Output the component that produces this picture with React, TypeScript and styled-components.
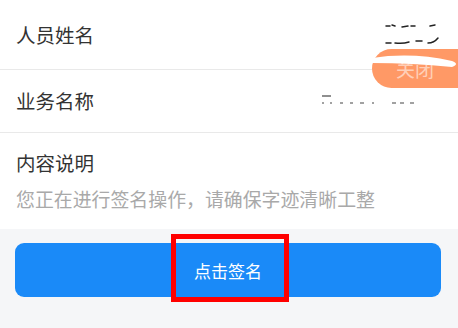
import React from "react";
import styled, { createGlobalStyle } from "styled-components";

const Global = createGlobalStyle`
  html, body { margin: 0; padding: 0; background: #f5f6f8; }
  body { font-family: "Noto Sans CJK SC", "Noto Sans", sans-serif; }
`;

const Page = styled.div`
  position: relative;
  width: 458px;
  height: 328px;
  overflow: hidden;
  background: #f5f6f8;
  display: flex;
  flex-direction: column;
`;

const Card = styled.div`
  background: #fff;
  display: flex;
  flex-direction: column;
`;

const Row = styled.div<{ $h: number }>`
  height: ${(p) => p.$h}px;
  display: flex;
  align-items: center;
  padding: 0 16px;
  border-bottom: 1px solid #e9e9e9;
  box-sizing: border-box;
`;

const Label = styled.div`
  font-size: 19.5px;
  color: #333;
  line-height: 1;
`;

const Desc = styled.div`
  display: flex;
  flex-direction: column;
  gap: 17px;
  padding: 20px 16px 18px;
  height: 96px;
  box-sizing: border-box;
`;

const Hint = styled.div`
  font-size: 18.9px;
  color: #a9a9a9;
  line-height: 1;
`;

const ButtonArea = styled.div`
  padding: 14px 17px 0 15px;
  position: relative;
`;

const SignButton = styled.button`
  width: 426px;
  height: 54px;
  border: none;
  border-radius: 9px;
  background: #1a8af8;
  color: #fff;
  font-family: "Noto Sans CJK SC", sans-serif;
  font-size: 17px;
  display: flex;
  align-items: center;
  justify-content: center;
  padding: 0;
`;

const Highlight = styled.div`
  position: absolute;
  left: 171px;
  top: 5px;
  width: 118px;
  height: 68px;
  border: 5px solid #ff0000;
  box-sizing: border-box;
`;

const Close = styled.div`
  position: absolute;
  left: 372px;
  top: 49px;
  width: 100px;
  height: 39px;
  border-radius: 20px 0 0 20px;
  background: #ff9966;
  color: rgba(255, 255, 255, 0.55);
  font-size: 19px;
  display: flex;
  align-items: center;
  padding-left: 24px;
  box-sizing: border-box;
`;

const Scribble = styled.svg`
  position: absolute;
  left: 0;
  top: 0;
  pointer-events: none;
`;

export default function App() {
  return (
    <>
      <Global />
      <Page>
        <Card>
          <Row $h={70}>
            <Label>人员姓名</Label>
          </Row>
          <Row $h={63}>
            <Label>业务名称</Label>
          </Row>
          <Desc>
            <Label>内容说明</Label>
            <Hint>您正在进行签名操作，请确保字迹清晰工整</Hint>
          </Desc>
        </Card>
        <ButtonArea>
          <SignButton>点击签名</SignButton>
          <Highlight />
        </ButtonArea>
        <Close>关闭</Close>
        <Scribble width="458" height="140" viewBox="0 0 458 140">
          <g stroke="#222" strokeWidth="1.5" fill="none" strokeLinecap="round">
            <path d="M386 26 l4 0 M392 25 l3 1 M402 27 l6 -1 M411 26 l4 0 M430 26 l5 -1" />
            <path d="M386 43 l5 0 M395 43 q8 1 14 -1 M416 41 l6 0 M428 43 q6 0 10 -5" />
          </g>
          <path d="M372 58 q40 -6 80 3 q8 3 0 6 q-40 -4 -80 -4 z" fill="#fff" />
          <g stroke="#444" strokeWidth="1.2" fill="none">
            <path d="M322 96 l9 0" />
            <path d="M322 103 l2 0 M330 103 l2 0 M340 103 l3 0 M350 103 l3 0 M360 103 l4 0 M372 103 l2 0 M392 103 l4 0 M400 103 l4 0 M410 103 l4 0" />
          </g>
        </Scribble>
      </Page>
    </>
  );
}
